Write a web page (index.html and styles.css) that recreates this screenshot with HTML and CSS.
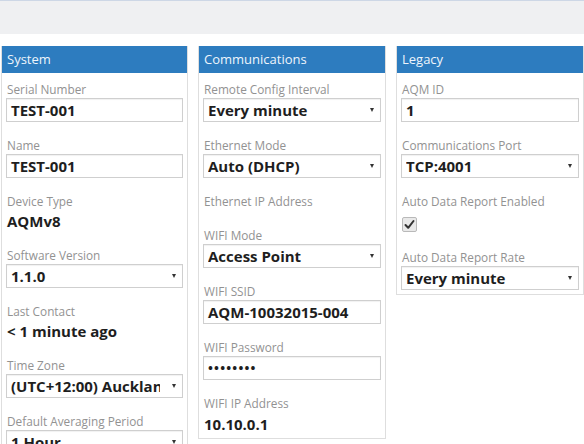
FILE: index.html
```html
<!DOCTYPE html>
<html>
<head>
<meta charset="utf-8">
<link rel="stylesheet" href="styles.css">
</head>
<body>
<div class="topbar"></div>
<div class="panels">
  <section class="panel">
    <div class="panel-head">System</div>
    <div class="panel-body">
      <div class="field"><div class="label">Serial Number</div><div class="input">TEST-001</div></div>
      <div class="field"><div class="label">Name</div><div class="input">TEST-001</div></div>
      <div class="field"><div class="label">Device Type</div><div class="value">AQMv8</div></div>
      <div class="field"><div class="label">Software Version</div><div class="input select"><span class="sel-text">1.1.0</span><span class="arrow"></span></div></div>
      <div class="field"><div class="label">Last Contact</div><div class="value">&lt; 1 minute ago</div></div>
      <div class="field"><div class="label">Time Zone</div><div class="input select"><span class="sel-text">(UTC+12:00) Auckland, Wellington</span><span class="arrow"></span></div></div>
      <div class="field"><div class="label">Default Averaging Period</div><div class="input select"><span class="sel-text">1 Hour</span><span class="arrow"></span></div></div>
    </div>
  </section>
  <section class="panel">
    <div class="panel-head">Communications</div>
    <div class="panel-body">
      <div class="field"><div class="label">Remote Config Interval</div><div class="input select"><span class="sel-text">Every minute</span><span class="arrow"></span></div></div>
      <div class="field"><div class="label">Ethernet Mode</div><div class="input select"><span class="sel-text">Auto (DHCP)</span><span class="arrow"></span></div></div>
      <div class="field"><div class="label">Ethernet IP Address</div><div class="value empty"></div></div>
      <div class="field"><div class="label">WIFI Mode</div><div class="input select"><span class="sel-text">Access Point</span><span class="arrow"></span></div></div>
      <div class="field"><div class="label">WIFI SSID</div><div class="input">AQM-10032015-004</div></div>
      <div class="field"><div class="label">WIFI Password</div><div class="input password">••••••••</div></div>
      <div class="field"><div class="label">WIFI IP Address</div><div class="value last-value">10.10.0.1</div></div>
    </div>
  </section>
  <section class="panel">
    <div class="panel-head">Legacy</div>
    <div class="panel-body">
      <div class="field"><div class="label">AQM ID</div><div class="input">1</div></div>
      <div class="field"><div class="label">Communications Port</div><div class="input select"><span class="sel-text">TCP:4001</span><span class="arrow"></span></div></div>
      <div class="field"><div class="label">Auto Data Report Enabled</div>
        <div class="check-row"><span class="checkbox"><svg width="13" height="13" viewBox="0 0 13 13"><path d="M2.5 7 L5.2 9.8 L10.5 3" fill="none" stroke="#333" stroke-width="2" stroke-linecap="round" stroke-linejoin="round"/></svg></span></div>
      </div>
      <div class="field"><div class="label">Auto Data Report Rate</div><div class="input select"><span class="sel-text">Every minute</span><span class="arrow"></span></div></div>
    </div>
  </section>
</div>
</body>
</html>
```

FILE: styles.css
```css
html, body {
  margin: 0;
  padding: 0;
  background: #ffffff;
  font-family: "Open Sans", "Noto Sans", "Liberation Sans", sans-serif;
  overflow: hidden;
}

.topbar {
  height: 33px;
  background: #eff0f2;
  border-top: 1px solid #cdd7e6;
}

.panels {
  display: grid;
  grid-template-columns: 187px 188px 188px;
  column-gap: 10px;
  padding-left: 1px;
  margin-top: 12px;
  align-items: start;
}

.panel {
  border: 1px solid #dedede;
  border-top: none;
  background: #fff;
}

.panel-head {
  background: #2d7cbf;
  color: #eef5fc;
  font-size: 13px;
  height: 27px;
  line-height: 27px;
  padding-left: 5px;
}

.panel-body {
  padding: 8px 4px 4px 4px;
}

.field {
  margin-bottom: 15px;
}

.field:last-child {
  margin-bottom: 0;
}

.label {
  color: #929292;
  font-size: 11.8px;
  line-height: 16px;
  height: 16px;
  margin-bottom: 1px;
  padding-left: 1px;
  white-space: nowrap;
}

.input {
  height: 22px;
  border: 1px solid #cfcfcf;
  box-shadow: inset 0 1px 1px rgba(0,0,0,0.06);
  font-size: 15px;
  font-weight: bold;
  color: #1e1e1e;
  line-height: 22px;
  padding-left: 4px;
  white-space: nowrap;
  overflow: hidden;
}

.select {
  display: flex;
  align-items: center;
  padding-right: 6px;
}

.sel-text {
  flex: 1;
  overflow: hidden;
  white-space: nowrap;
}

.arrow {
  width: 0;
  height: 0;
  border-left: 2.5px solid transparent;
  border-right: 2.5px solid transparent;
  border-top: 4px solid #333;
  margin-left: 12px;
}

.password {
  font-size: 13px;
  letter-spacing: 1.2px;
}

.value {
  font-size: 15px;
  font-weight: bold;
  color: #1e1e1e;
  line-height: 22px;
  height: 22px;
  padding-left: 1px;
  white-space: nowrap;
}

.value.empty {
  height: 2px;
}

.value.last-value {
  padding-top: 2px;
  height: 20px;
  line-height: 20px;
}

.check-row {
  height: 24px;
  padding-top: 4px;
  box-sizing: border-box;
  padding-left: 1px;
}

.checkbox {
  display: inline-flex;
  align-items: center;
  justify-content: center;
  width: 13px;
  height: 13px;
  border: 1px solid #b9b9b9;
  background: #e9e9e9;
  border-radius: 2px;
}
```
